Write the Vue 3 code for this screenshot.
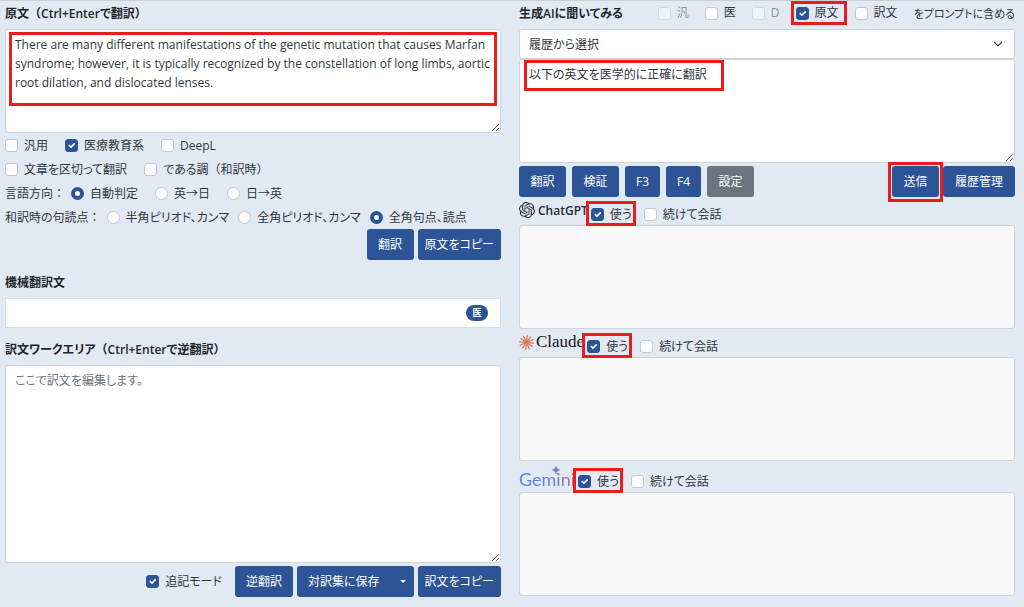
<script setup>
import { ref } from 'vue'

const source = ref(
  'There are many different manifestations of the genetic mutation that causes Marfan syndrome; however, it is typically recognized by the constellation of long limbs, aortic root dilation, and dislocated lenses.'
)
const prompt = ref('以下の英文を医学的に正確に翻訳')
const machine = ref('')
const draft = ref('')
const answers = ref(['', '', ''])
const direction = ref('auto')
const punctuation = ref('ja')
const rays = Array.from({ length: 12 }, (_, i) => i * 30 + 6)
const include = [
  { label: '汎', disabled: true },
  { label: '医' },
  { label: 'D', disabled: true },
  { label: '原文', checked: true, marked: true },
  { label: '訳文' }
]
</script>

<template>
  <main class="page">
    <section class="col">
      <h2 class="title"><label for="source">原文<span class="full">（</span>Ctrl+Enterで翻訳<span class="full">）</span></label></h2>
      <div class="field">
        <textarea id="source" v-model="source" class="box short" spellcheck="false"></textarea>
        <span class="mark mark-source"></span>
      </div>

      <div class="options">
        <div class="row">
          <label class="opt"><input type="checkbox">汎用</label>
          <label class="opt"><input type="checkbox" checked>医療教育系</label>
          <label class="opt"><input type="checkbox">DeepL</label>
        </div>
        <div class="row">
          <label class="opt"><input type="checkbox">文章を区切って翻訳</label>
          <label class="opt"><input type="checkbox"><span>である調<span class="full">（</span>和訳時<span class="full">）</span></span></label>
        </div>
        <div class="row" role="radiogroup" aria-labelledby="dir-label">
          <span id="dir-label" class="lead">言語方向<span class="full">：</span></span>
          <label class="opt"><input v-model="direction" type="radio" name="direction" value="auto">自動判定</label>
          <label class="opt"><input v-model="direction" type="radio" name="direction" value="en-ja">英→日</label>
          <label class="opt"><input v-model="direction" type="radio" name="direction" value="ja-en">日→英</label>
        </div>
        <div class="row tight" role="radiogroup" aria-labelledby="punct-label">
          <span id="punct-label" class="lead">和訳時の句読点<span class="full">：</span></span>
          <label class="opt"><input v-model="punctuation" type="radio" name="punct" value="half">半角ピリオド、カンマ</label>
          <label class="opt"><input v-model="punctuation" type="radio" name="punct" value="wide">全角ピリオド、カンマ</label>
          <label class="opt"><input v-model="punctuation" type="radio" name="punct" value="ja">全角句点、読点</label>
        </div>
      </div>
      <div class="actions end">
        <button type="button" class="btn">翻訳</button>
        <button type="button" class="btn compact">原文をコピー</button>
      </div>

      <h2 class="title spaced"><label for="machine">機械翻訳文</label></h2>
      <div class="field">
        <input id="machine" v-model="machine" type="text" class="line">
        <span class="badge">医</span>
      </div>

      <h2 class="title spaced"><label for="draft">訳文ワークエリア<span class="full">（</span>Ctrl+Enterで逆翻訳<span class="full">）</span></label></h2>
      <textarea id="draft" v-model="draft" class="box tall" placeholder="ここで訳文を編集します。"></textarea>
      <div class="actions end after">
        <label class="opt append"><input type="checkbox" checked>追記モード</label>
        <button type="button" class="btn">逆翻訳</button>
        <button type="button" class="btn split">対訳集に保存<span class="caret"></span></button>
        <button type="button" class="btn compact">訳文をコピー</button>
      </div>
    </section>

    <section class="col">
      <div class="title head">
        <h2><label for="prompt">生成AIに聞いてみる</label></h2>
        <div class="include">
          <label v-for="o in include" :key="o.label" class="opt" :class="{ off: o.disabled, marked: o.marked, 'mark-opt': o.marked }">
            <input type="checkbox" :checked="o.checked" :disabled="o.disabled">{{ o.label }}
          </label>
          <span class="suffix">をプロンプトに含める</span>
        </div>
      </div>
      <select class="select" aria-label="履歴から選択">
        <option>履歴から選択</option>
      </select>
      <div class="field">
        <textarea id="prompt" v-model="prompt" class="box short" spellcheck="false"></textarea>
        <span class="mark mark-prompt"></span>
      </div>
      <div class="actions after">
        <div class="presets">
          <button type="button" class="btn">翻訳</button>
          <button type="button" class="btn">検証</button>
          <button type="button" class="btn letter">F3</button>
          <button type="button" class="btn letter">F4</button>
          <button type="button" class="btn grey">設定</button>
        </div>
        <span class="marked mark-send"><button type="button" class="btn">送信</button></span>
        <button type="button" class="btn roomy">履歴管理</button>
      </div>

      <div class="service">
        <span class="logo gpt">
          <svg viewBox="0 0 24 24" width="16" height="16" aria-hidden="true"><path fill="#222a33" d="M22.2819 9.8211a5.9847 5.9847 0 0 0-.5157-4.9108 6.0462 6.0462 0 0 0-6.5098-2.9A6.0651 6.0651 0 0 0 4.9807 4.1818a5.9847 5.9847 0 0 0-3.9977 2.9 6.0462 6.0462 0 0 0 .7427 7.0966 5.98 5.98 0 0 0 .511 4.9107 6.051 6.051 0 0 0 6.5146 2.9001A5.9847 5.9847 0 0 0 13.2599 24a6.0557 6.0557 0 0 0 5.7718-4.2058 5.9894 5.9894 0 0 0 3.9977-2.9001 6.0557 6.0557 0 0 0-.7475-7.0729zm-9.022 12.6081a4.4755 4.4755 0 0 1-2.8764-1.0408l.1419-.0804 4.7783-2.7582a.7948.7948 0 0 0 .3927-.6813v-6.7369l2.02 1.1686a.071.071 0 0 1 .038.052v5.5826a4.504 4.504 0 0 1-4.4945 4.4944zm-9.6607-4.1254a4.4708 4.4708 0 0 1-.5346-3.0137l.142.0852 4.783 2.7582a.7712.7712 0 0 0 .7806 0l5.8428-3.3685v2.3324a.0804.0804 0 0 1-.0332.0615L9.74 19.9502a4.4992 4.4992 0 0 1-6.1408-1.6464zM2.3408 7.8956a4.485 4.485 0 0 1 2.3655-1.9728V11.6a.7664.7664 0 0 0 .3879.6765l5.8144 3.3543-2.0201 1.1685a.0757.0757 0 0 1-.071 0l-4.8303-2.7865A4.504 4.504 0 0 1 2.3408 7.872zm16.5963 3.8558L13.1038 8.364 15.1192 7.2a.0757.0757 0 0 1 .071 0l4.8303 2.7913a4.4944 4.4944 0 0 1-.6765 8.1042v-5.6772a.79.79 0 0 0-.407-.667zm2.0107-3.0231l-.142-.0852-4.7735-2.7818a.7759.7759 0 0 0-.7854 0L9.409 9.2297V6.8974a.0662.0662 0 0 1 .0284-.0615l4.8303-2.7866a4.4992 4.4992 0 0 1 6.6802 4.66zM8.3065 12.863l-2.02-1.1638a.0804.0804 0 0 1-.038-.0567V6.0742a4.4992 4.4992 0 0 1 7.3757-3.4537l-.142.0805L8.704 5.459a.7948.7948 0 0 0-.3927.6813zm1.0976-2.3654l2.602-1.4998 2.6069 1.4998v2.9994l-2.5974 1.4997-2.6067-1.4997Z" /></svg>
          ChatGPT
        </span>
        <label class="opt marked mark-use"><input type="checkbox" checked>使う</label>
        <label class="opt"><input type="checkbox">続けて会話</label>
      </div>
      <textarea v-model="answers[0]" class="box answer" readonly aria-label="ChatGPT"></textarea>

      <div class="service">
        <span class="logo claude">
          <svg viewBox="-12 -12 24 24" width="15" height="15" aria-hidden="true">
            <path v-for="r in rays" :key="r" d="M0 -1 L0 -11" :transform="`rotate(${r})`" stroke="#d97757" stroke-width="2" stroke-linecap="round" />
          </svg>
          Claude
        </span>
        <label class="opt marked mark-use"><input type="checkbox" checked>使う</label>
        <label class="opt"><input type="checkbox">続けて会話</label>
      </div>
      <textarea v-model="answers[1]" class="box answer" readonly aria-label="Claude"></textarea>

      <div class="service high">
        <span class="logo gemini">
          <span class="gemini-text">Gemini</span>
          <svg class="spark" viewBox="0 0 16 16" width="8" height="8" aria-hidden="true"><path fill="#7571c9" d="M8 0Q8.600 7.400 16 8Q8.600 8.600 8 16Q7.400 8.600 0 8Q7.400 7.400 8 0Z" stroke="#7571c9" /></svg>
        </span>
        <label class="opt marked mark-use"><input type="checkbox" checked>使う</label>
        <label class="opt"><input type="checkbox">続けて会話</label>
      </div>
      <textarea v-model="answers[2]" class="box answer" readonly aria-label="Gemini"></textarea>
    </section>
  </main>
</template>

<style>
body {
  background: #e1e9f3;
}
</style>

<style scoped>
.page {
  display: grid;
  grid-template-columns: 1fr 1fr;
  column-gap: 18px;
  padding: 0 9px 9px 5px;
  border-top: 1px solid #cccfd3;
  color: #30363d;
  font: 12px/19px "Open Sans", "Noto Sans CJK JP", sans-serif;
  font-feature-settings: "palt";
}
.page *,
.page *::after {
  box-sizing: border-box;
}
.col {
  display: flex;
  flex-direction: column;
  min-width: 0;
}
.full {
  font-feature-settings: normal;
}
h2 {
  margin: 0;
  font-size: 12px;
  font-weight: 600;
  color: #212529;
}
.title {
  height: 24px;
  margin-bottom: 4px;
  line-height: 26px;
}
.spaced {
  margin-top: 9px;
}
.head {
  display: flex;
  justify-content: space-between;
}
.include {
  display: flex;
  gap: 16px;
}
.suffix {
  font-size: 11px;
}
.field {
  position: relative;
  display: flex;
}
textarea,
input,
select,
button {
  font: inherit;
  font-feature-settings: inherit;
  color: inherit;
  margin: 0;
}
.box {
  display: block;
  width: 100%;
  padding: 5px 9px;
  border: 1px solid #ced4da;
  border-radius: 3px;
  background: #fff;
  outline: none;
}
.short {
  height: 104px;
}
.tall {
  height: 198px;
}
.answer {
  height: 104px;
  background: #f9f9f9;
  resize: none;
}
.box::placeholder {
  color: #6c757d;
}
.line {
  width: 100%;
  height: 30px;
  padding: 0 48px 0 9px;
  border: 1px solid #dcdfe2;
  background: #fff;
}
.badge {
  position: absolute;
  top: 7px;
  right: 13px;
  width: 22px;
  height: 16px;
  border-radius: 8px;
  background: #2d5496;
  color: #fff;
  font-size: 9px;
  font-weight: 700;
  line-height: 16px;
  text-align: center;
}
.select {
  width: 100%;
  height: 30px;
  padding: 0 9px;
  appearance: none;
  border: 1px solid #ced4da;
  border-radius: 3px;
  background: #fff url("data:image/svg+xml,%3Csvg xmlns='http://www.w3.org/2000/svg' viewBox='0 0 16 16'%3E%3Cpath fill='none' stroke='%23343a40' stroke-width='2' stroke-linecap='round' stroke-linejoin='round' d='m2 5 6 6 6-6'/%3E%3C/svg%3E") no-repeat right 11px center / 10px 10px;
}
.row {
  display: flex;
  align-items: center;
  height: 24px;
  gap: 17px;
}
.lead {
  margin-right: -11px;
}
.tight {
  gap: 9px;
}
.tight .lead {
  margin-right: -3px;
}
.opt {
  display: flex;
  align-items: center;
  gap: 6px;
  white-space: nowrap;
}
.opt input {
  flex: none;
  width: 13px;
  height: 13px;
  appearance: none;
  border: 1px solid #c3c8ce;
  border-radius: 3px;
  background: #fff;
}
.opt input[type="radio"] {
  border-radius: 50%;
}
.opt input:checked {
  border-color: #2d5496;
  background: #2d5496 url("data:image/svg+xml,%3Csvg xmlns='http://www.w3.org/2000/svg' viewBox='0 0 20 20'%3E%3Cpath fill='none' stroke='%23fff' stroke-width='3' stroke-linecap='round' stroke-linejoin='round' d='m6 10 3 3 6-6'/%3E%3C/svg%3E") center / 11px 11px no-repeat;
}
.opt input[type="radio"]:checked {
  border: 4px solid #2d5496;
  background: #fff;
}
.off {
  opacity: 0.5;
}
.append {
  margin-right: 9px;
}
.actions {
  display: flex;
  gap: 4px;
}
.end {
  justify-content: flex-end;
  margin-bottom: 1px;
}
.after {
  margin-top: 3px;
}
.presets {
  display: flex;
  gap: 6px;
  margin-right: auto;
}
.btn {
  display: flex;
  align-items: center;
  justify-content: center;
  min-width: 47px;
  height: 31px;
  padding: 0 11px;
  border: 0;
  border-radius: 3px;
  background: #2d5496;
  color: #fff;
  white-space: nowrap;
}
.letter {
  min-width: 0;
}
.compact {
  padding: 0 7px;
}
.roomy {
  padding: 0 12px;
}
.grey {
  background: #6c757d;
}
.split {
  gap: 20px;
  padding-right: 8px;
}
.caret {
  border: 3px solid transparent;
  border-top-color: #fff;
  border-bottom: 0;
}
.service {
  display: flex;
  align-items: flex-end;
  height: 28px;
  padding-bottom: 1px;
  gap: 12px;
}
.high {
  height: 31px;
}
.service .opt {
  height: 20px;
}
.logo {
  display: flex;
  align-items: center;
  gap: 3px;
  height: 20px;
  margin: 0 -9px 4px 0;
}
.gpt {
  font-weight: 600;
  color: #222a33;
}
.claude {
  gap: 2px;
  color: #141413;
  font: 500 17px/20px "Liberation Serif", serif;
}
.gemini {
  position: relative;
  margin-bottom: 2px;
}
.gemini-text {
  background: linear-gradient(90deg, #4489e8, #6f7fd6 60%, #c06a87);
  background-clip: text;
  color: transparent;
  font: 18px/22px Lato, sans-serif;
}
.spark {
  position: absolute;
  top: -3px;
  left: 33px;
}
/* Red callout frames laid over the highlighted controls */
.marked {
  position: relative;
}
.mark,
.marked::after {
  content: "";
  position: absolute;
  border: 3px solid #ea1c1c;
  pointer-events: none;
}
.mark-source {
  inset: 3px 4px 27px;
}
.mark-prompt {
  top: 1px;
  left: 5px;
  width: 200px;
  height: 31px;
}
.mark-opt::after {
  inset: 0 -8px 0 -5px;
}
.mark-send::after {
  inset: -4px -4px -5px;
}
.mark-use::after {
  inset: -3px -4px -2px -5px;
}
</style>
